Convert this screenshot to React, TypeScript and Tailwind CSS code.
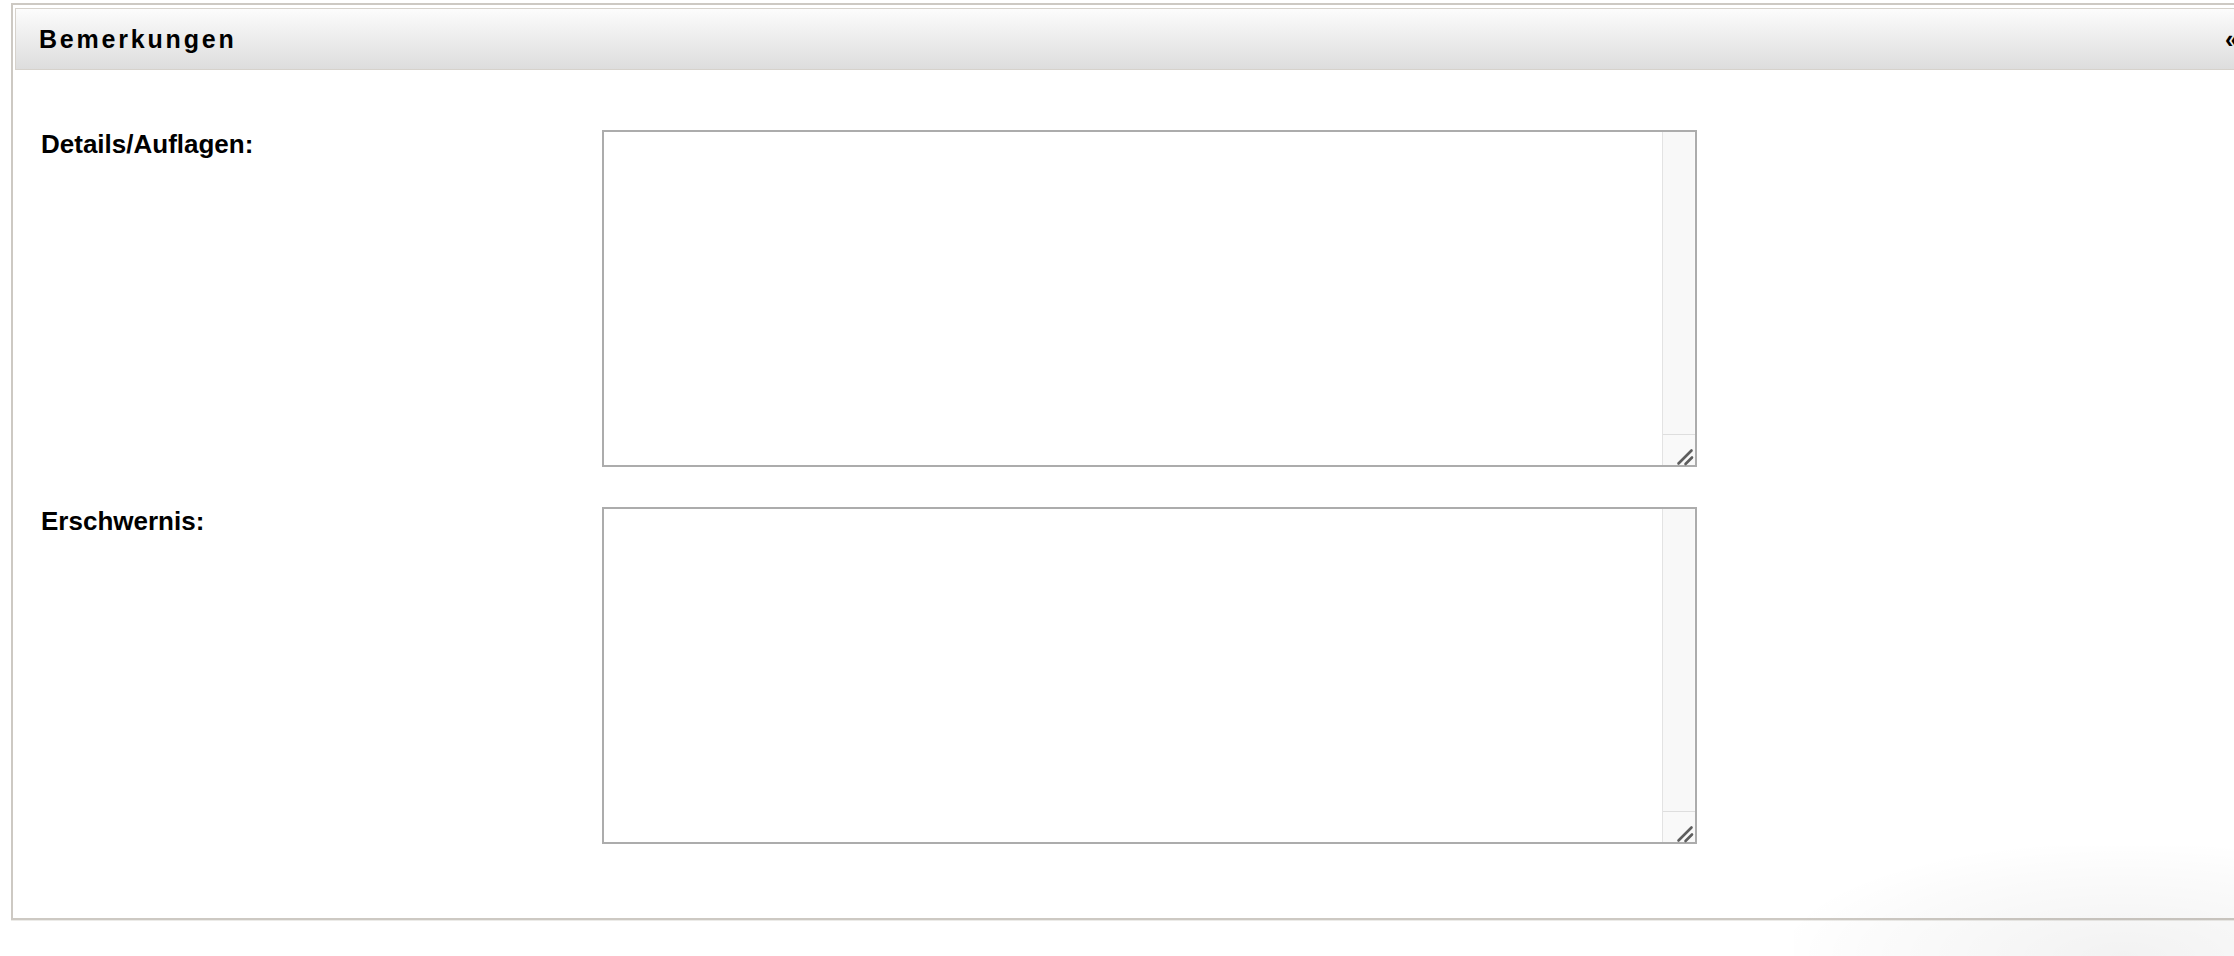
import type { ReactNode } from 'react';

// Abschnitt "Bemerkungen": zwei mehrzeilige Felder mit Label links.
const FIELDS = [
  { id: 'details', label: 'Details/Auflagen:' },
  { id: 'erschwernis', label: 'Erschwernis:' },
];

function ResizeGrip(): ReactNode {
  return (
    <svg width="31" height="31" viewBox="0 0 31 31" className="block">
      <line x1="15.5" y1="28.5" x2="28.5" y2="15.5" stroke="#5e5e5e" strokeWidth="2.6" strokeLinecap="round" />
      <line x1="22.5" y1="29" x2="29" y2="22.5" stroke="#5e5e5e" strokeWidth="2.6" strokeLinecap="round" />
    </svg>
  );
}

// Textarea mit "klassischer" Scrollleiste rechts und Resize-Ecke unten.
function NoteArea({ id }: { id: string }): ReactNode {
  return (
    <div className="flex h-[337px] w-[1095px] border-2 border-[#acacac] bg-white">
      <textarea
        id={id}
        className="h-full min-w-0 flex-1 resize-none bg-white p-1 text-[20px] outline-none"
      />
      <div className="flex w-[33px] flex-col border-l border-[#e3e3e3] bg-[#f8f8f8]">
        <div className="flex-1 border-r border-[#fbfbfb]" />
        <div className="h-[31px] border-t border-[#dedede] bg-[#f9f9f9]">
          <ResizeGrip />
        </div>
      </div>
    </div>
  );
}

export default function App(): ReactNode {
  return (
    <div className="relative h-[956px] w-[2234px] overflow-hidden bg-white font-['Liberation_Sans',Arial,Helvetica,sans-serif] text-black">
      <div className="ml-[11px] mt-[3px] w-[2245px] border-2 border-r-0 border-[#cdc9c3] shadow-[0_1px_0_#ecebe8]">
        {/* Kopfzeile */}
        <div className="mx-[2px] mt-[3px] flex h-[62px] items-center justify-between border border-[#d6d2cc] bg-gradient-to-b from-[#fcfcfc] to-[#dddddd] pl-[23px] pr-[14px]">
          <span className="text-[25px] font-bold leading-none tracking-[2.8px]">Bemerkungen</span>
          <span className="text-[25px] font-bold leading-none">«</span>
        </div>

        {/* Felder */}
        <div className="grid grid-cols-[561px_1095px] gap-y-[40px] pb-[74px] pl-[28px] pt-[60px]">
          {FIELDS.map((f) => (
            <div key={f.id} className="contents">
              <label htmlFor={f.id} className="text-[26px] font-bold leading-[1.13]">
                {f.label}
              </label>
              <NoteArea id={f.id} />
            </div>
          ))}
        </div>
      </div>

      {/* weicher Schatten unten rechts */}
      <div className="pointer-events-none absolute bottom-0 right-0 h-[110px] w-[440px] bg-[radial-gradient(ellipse_at_75%_100%,rgba(0,0,0,0.05),rgba(0,0,0,0.015)_55%,transparent_75%)]" />
    </div>
  );
}
